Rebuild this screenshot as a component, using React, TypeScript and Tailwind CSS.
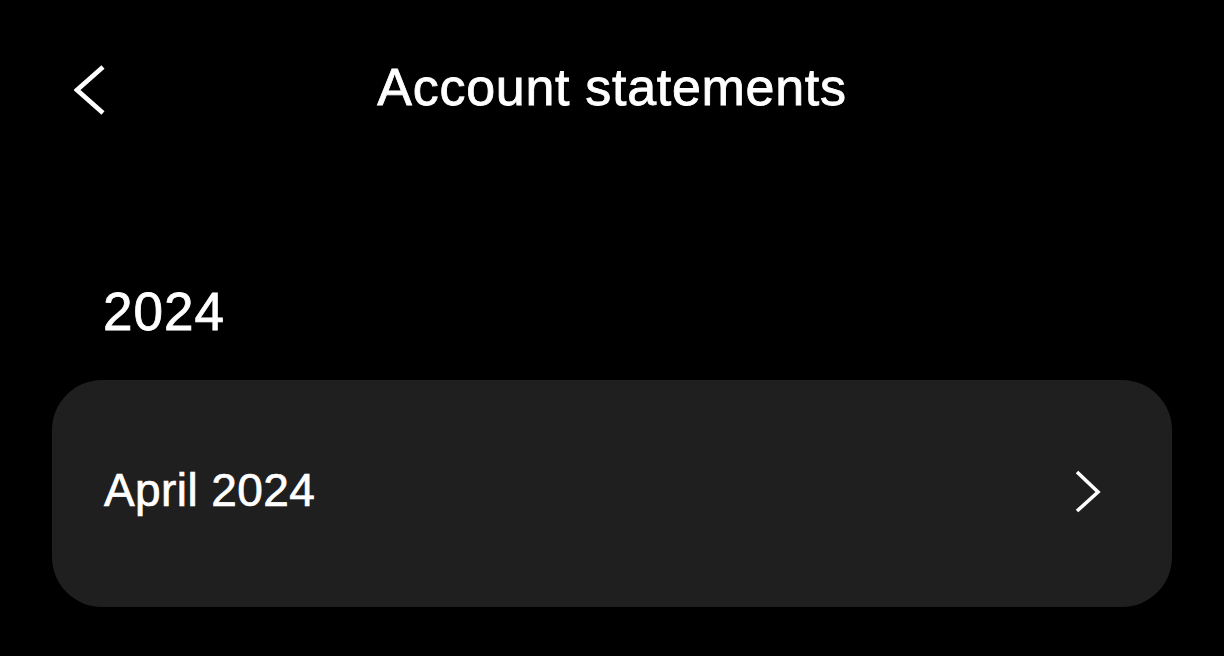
import React from 'react';

const FONT = { fontFamily: '"Liberation Sans", Arial, sans-serif' };

function BackChevron() {
  return (
    <svg width="32" height="52" viewBox="0 0 32 52" fill="none" className="ml-[74px] mt-[3px]">
      <polyline points="29,3 3,26 29,49" stroke="white" strokeWidth="4.6" />
    </svg>
  );
}

function RowChevron() {
  return (
    <svg width="26" height="44" viewBox="0 0 26 44" fill="none" className="shrink-0 mb-[4px]">
      <polyline points="2,2 23,22 2,41" stroke="white" strokeWidth="3.6" />
    </svg>
  );
}

export default function App() {
  const statements = ['April 2024'];

  return (
    <div className="w-full h-[656px] bg-black text-white overflow-hidden" style={FONT}>
      {/* Header */}
      <div className="pt-[61px] grid grid-cols-[1fr_auto_1fr] items-start">
        <div>
          <BackChevron />
        </div>
        <h1 className="text-[52px] leading-[52px] tracking-[0.7px] font-normal [-webkit-text-stroke:0.8px_white]">
          Account statements
        </h1>
        <div />
      </div>

      {/* Year group */}
      <h2 className="mt-[169px] pl-[103px] text-[53px] leading-[53px] tracking-[1px] [-webkit-text-stroke:0.8px_white]">
        2024
      </h2>

      <div className="mt-[42px] mx-[52px] space-y-3">
        {statements.map(s => (
          <div key={s} className="h-[227px] rounded-[50px] bg-[#1f1f1f] flex items-center justify-between pl-[52px] pr-[71px]">
            <span className="text-[46px] leading-[46px] tracking-[0.4px] mb-[7px] [-webkit-text-stroke:0.7px_white]">{s}</span>
            <RowChevron />
          </div>
        ))}
      </div>
    </div>
  );
}
